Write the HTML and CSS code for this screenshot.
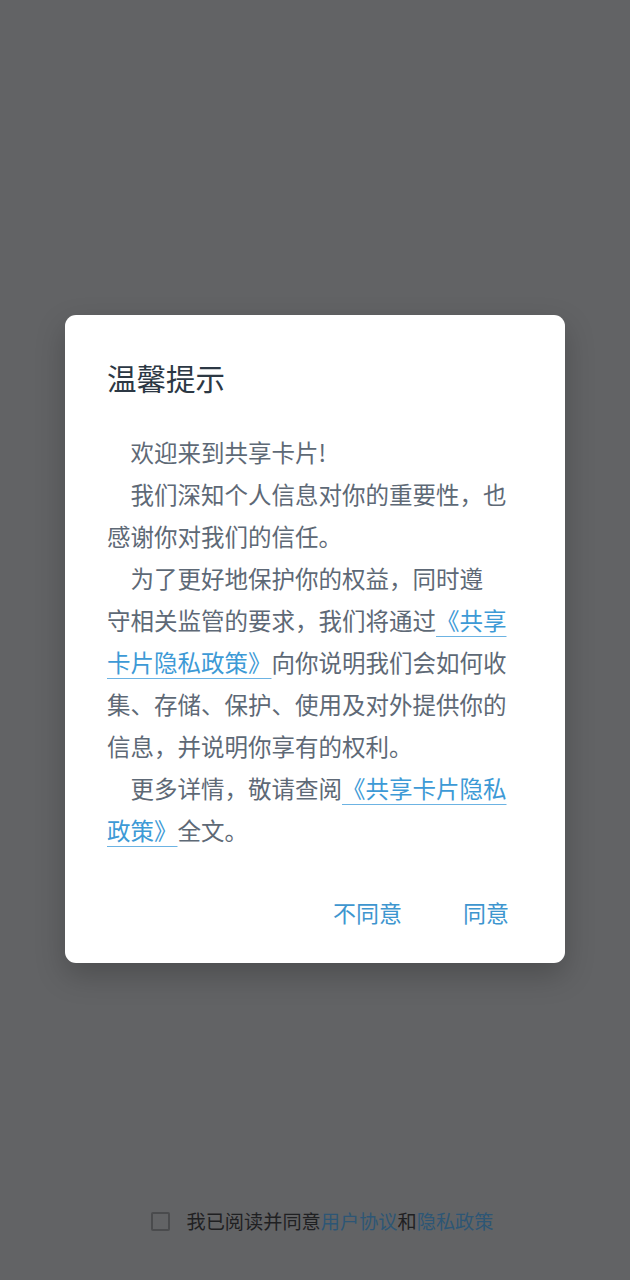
FILE: index.html
```html
<!DOCTYPE html>
<html lang="zh-CN">
<head>
<meta charset="utf-8">
<title>温馨提示</title>
<link rel="stylesheet" href="styles.css">
</head>
<body>
<div class="screen">
  <div class="dialog">
    <h1 class="title">温馨提示</h1>
    <div class="content">
      <p class="para">欢迎来到共享卡片!</p>
      <p class="para">我们深知个人信息对你的重要性，也感谢你对我们的信任。</p>
      <p class="para">为了更好地保护你的权益，同时遵<br>守相关监管的要求，我们将通过<a class="link">《共享卡片隐私政策》</a>向你说明我们会如何收集、存储、保护、使用及对外提供你的信息，并说明你享有的权利。</p>
      <p class="para">更多详情，敬请查阅<a class="link">《共享卡片隐私政策》</a>全文。</p>
    </div>
    <div class="actions">
      <span class="btn">不同意</span>
      <span class="btn">同意</span>
    </div>
  </div>
  <div class="agree">
    <span class="checkbox"></span>
    <span class="agree-text">我已阅读并同意<span class="agree-link">用户协议</span>和<span class="agree-link">隐私政策</span></span>
  </div>
</div>
</body>
</html>
```

FILE: styles.css
```css
html, body {
  margin: 0;
  padding: 0;
  background: #626365;
}
body {
  font-family: "Noto Sans CJK SC", "Noto Sans", sans-serif;
}
.screen {
  height: 1280px;
  display: flex;
  flex-direction: column;
  align-items: center;
  box-sizing: border-box;
  padding-top: 315px;
  padding-bottom: 45px;
}
.dialog {
  width: 500px;
  box-sizing: border-box;
  background: #ffffff;
  border-radius: 11px;
  box-shadow: 0 12px 30px rgba(0, 0, 0, 0.22);
  padding: 42px 56px 30px 42px;
}
.title {
  margin: 0;
  font-size: 29.5px;
  line-height: 40px;
  font-weight: 400;
  color: #2c3844;
}
.content {
  margin-top: 34px;
  width: 402px;
}
.para {
  margin: 0;
  font-size: 23.5px;
  line-height: 42px;
  text-indent: 1em;
  color: #5e6976;
}
.link {
  color: #3d9ad6;
  text-decoration: underline;
  text-decoration-color: #6cb3e3;
  text-decoration-thickness: 1px;
  text-underline-offset: 6px;
}
.actions {
  margin-top: 40px;
  display: flex;
  justify-content: flex-end;
  gap: 61px;
}
.btn {
  font-size: 23px;
  line-height: 42px;
  color: #3e96cf;
}
.agree {
  margin-top: auto;
  display: flex;
  align-items: center;
  gap: 17px;
  margin-left: 14px;
}
.checkbox {
  width: 15px;
  height: 15px;
  border: 2px solid #4a4b4d;
  border-radius: 2px;
}
.agree-text {
  font-size: 19.2px;
  line-height: 28px;
  color: #1f2022;
}
.agree-link {
  color: #2d5675;
}
```
